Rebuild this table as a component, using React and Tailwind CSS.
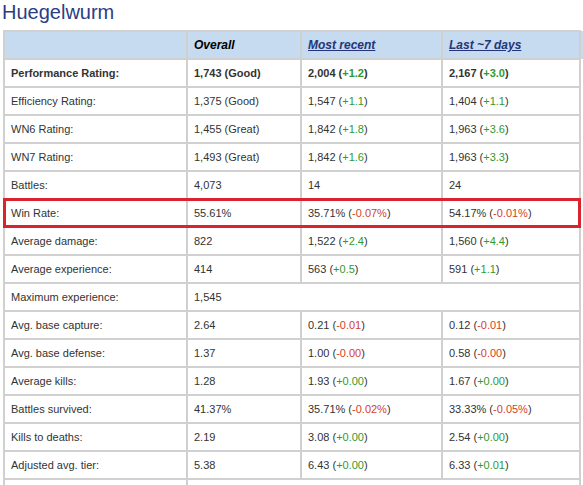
import React from 'react'

const rows = [
  { label: 'Performance Rating:', bold: true, overall: '1,743 (Good)', recent: ['2,004', '+1.2'], week: ['2,167', '+3.0'] },
  { label: 'Efficiency Rating:', overall: '1,375 (Good)', recent: ['1,547', '+1.1'], week: ['1,404', '+1.1'] },
  { label: 'WN6 Rating:', overall: '1,455 (Great)', recent: ['1,842', '+1.8'], week: ['1,963', '+3.6'] },
  { label: 'WN7 Rating:', overall: '1,493 (Great)', recent: ['1,842', '+1.6'], week: ['1,963', '+3.3'] },
  { label: 'Battles:', overall: '4,073', recent: ['14'], week: ['24'] },
  { label: 'Win Rate:', overall: '55.61%', recent: ['35.71%', '-0.07%'], week: ['54.17%', '-0.01%'] },
  { label: 'Average damage:', overall: '822', recent: ['1,522', '+2.4'], week: ['1,560', '+4.4'] },
  { label: 'Average experience:', overall: '414', recent: ['563', '+0.5'], week: ['591', '+1.1'] },
  { label: 'Maximum experience:', overall: '1,545', span: true },
  { label: 'Avg. base capture:', overall: '2.64', recent: ['0.21', '-0.01'], week: ['0.12', '-0.01'] },
  { label: 'Avg. base defense:', overall: '1.37', recent: ['1.00', '-0.00'], week: ['0.58', '-0.00'] },
  { label: 'Average kills:', overall: '1.28', recent: ['1.93', '+0.00'], week: ['1.67', '+0.00'] },
  { label: 'Battles survived:', overall: '41.37%', recent: ['35.71%', '-0.02%'], week: ['33.33%', '-0.05%'] },
  { label: 'Kills to deaths:', overall: '2.19', recent: ['3.08', '+0.00'], week: ['2.54', '+0.00'] },
  { label: 'Adjusted avg. tier:', overall: '5.38', recent: ['6.43', '+0.00'], week: ['6.33', '+0.01'] },
]

const cell = 'border-2 border-[#d0d0d0] pl-[6px] pr-1 py-0 h-[28px] text-left align-middle whitespace-nowrap'

function Delta({ value }) {
  if (!value[1]) return <>{value[0]}</>
  const down = value[1].startsWith('-')
  return (
    <>
      {value[0]} (<span className={down ? 'text-[#d2412a]' : 'text-[#2f9a2f]'}>{value[1]}</span>)
    </>
  )
}

export default function App() {
  return (
    <div className="w-[583px] h-[485px] overflow-hidden bg-white font-['Liberation_Sans',Arial,sans-serif] text-[#333]">
      <h1 className="pl-[2px] text-[20px] leading-[24px] text-[#2b3d84] mb-[6px]">Huegelwurm</h1>
      <div className="relative pl-[3px]">
        <table className="border-collapse table-fixed w-[640px] text-[11px]">
          <colgroup>
            <col className="w-[183px]" />
            <col className="w-[114px]" />
            <col className="w-[141px]" />
            <col className="w-[138px]" />
            <col className="w-[64px]" />
          </colgroup>
          <thead>
            <tr className="bg-[#c6daf0] text-[12px] italic font-bold">
              <th className={cell}></th>
              <th className={cell + ' text-black'}>Overall</th>
              <th className={cell}><a href="#" className="underline text-[#25357a]">Most recent</a></th>
              <th className={cell}><a href="#" className="underline text-[#25357a]">Last ~7 days</a></th>
              <th className="border-l-2 border-[#d0d0d0]"></th>
            </tr>
          </thead>
          <tbody>
            {rows.map((r) => (
              <tr key={r.label} className={r.bold ? 'font-bold' : ''}>
                <td className={cell}>{r.label}</td>
                {r.span ? (
                  <td className={cell} colSpan={3}>{r.overall}</td>
                ) : (
                  <>
                    <td className={cell}>{r.overall}</td>
                    <td className={cell}><Delta value={r.recent} /></td>
                    <td className={cell}><Delta value={r.week} /></td>
                  </>
                )}
              </tr>
            ))}
            <tr>
              <td className={cell}></td>
              <td className={cell} colSpan={3}></td>
            </tr>
          </tbody>
        </table>
        <div className="absolute left-[3px] top-[168px] w-[578px] h-[30px] border-[3px] border-[#d9232e] pointer-events-none"></div>
      </div>
    </div>
  )
}
